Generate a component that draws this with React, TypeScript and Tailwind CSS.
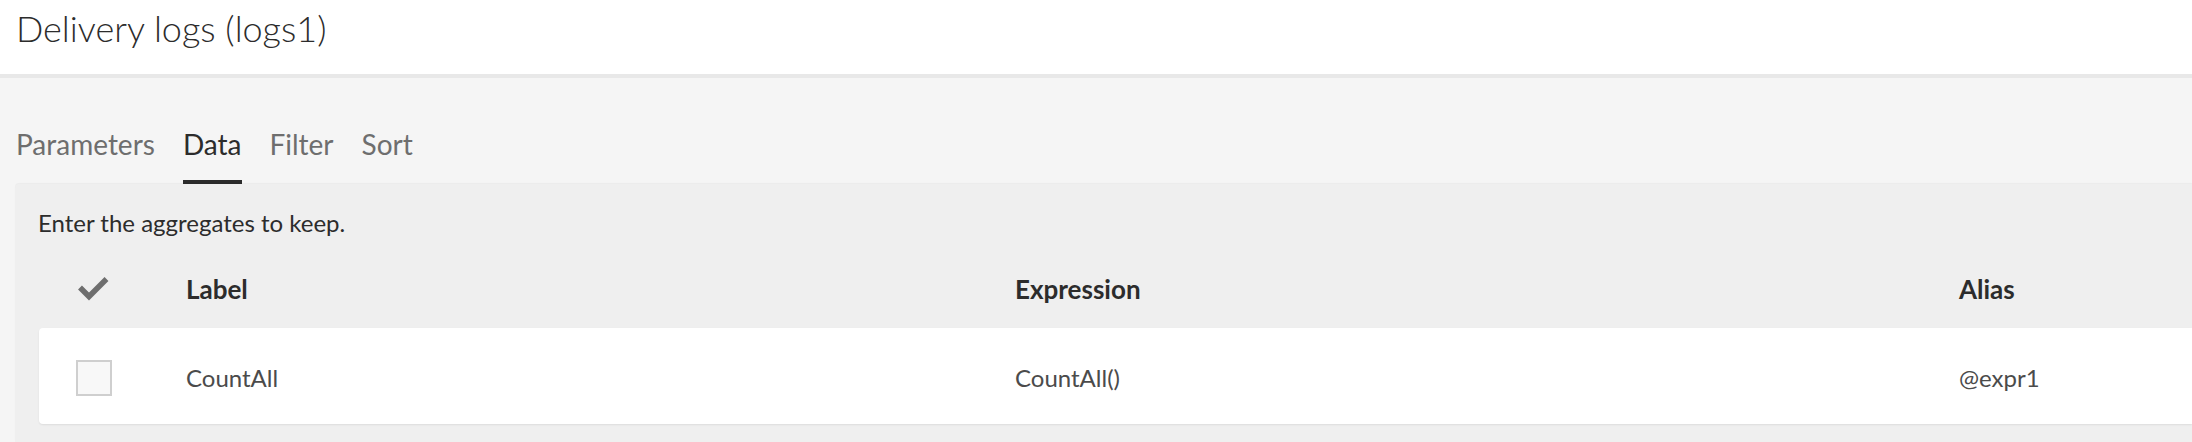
const CheckIcon = () => (
  <svg width="32" height="24" viewBox="0 0 32 24" fill="none">
    <polyline
      points="3,10.5 12,19.5 29.5,2"
      stroke="#6e6e6e"
      strokeWidth="5.5"
      strokeLinejoin="miter"
    />
  </svg>
);

const tabs = ["Parameters", "Data", "Filter", "Sort"];

const App = () => {
  return (
    <div className="flex h-[442px] flex-col overflow-hidden bg-[#f5f5f5] font-['Lato',sans-serif]">
      <div className="h-[78px] border-b-4 border-[#e8e8e8] bg-white pl-4 pt-[10px]">
        <h1 className="text-[36px] font-light leading-none text-[#2c2c2c]">Delivery logs (logs1)</h1>
      </div>

      <div className="flex gap-[28px] pl-4 pt-[52px]">
        {tabs.map((tab) => (
          <div
            key={tab}
            className={
              tab === "Data"
                ? "border-b-4 border-[#2c2c2c] pb-[22px] text-[28px] leading-none text-[#2c2c2c]"
                : "border-b-4 border-transparent pb-[22px] text-[28px] leading-none text-[#6e6e6e]"
            }
          >
            {tab}
          </div>
        ))}
      </div>

      <div className="ml-[15px] flex-1 rounded-tl-[4px] bg-[#efefef] pl-6 pt-[27px] shadow-[0_-1px_1px_rgba(0,0,0,0.04)]">
        <p className="-ml-px text-[24px] leading-none text-[#2c2c2c]">Enter the aggregates to keep.</p>

        <div className="mt-[20px] flex h-[68px] items-center text-[26px] font-bold leading-none text-[#2c2c2c]">
          <div className="w-[147px] pl-[38px]">
            <CheckIcon />
          </div>
          <div className="w-[829px]">Label</div>
          <div className="w-[944px]">Expression</div>
          <div>Alias</div>
        </div>

        <div className="mt-[5px] flex h-[96px] items-center rounded-l-[4px] bg-white pt-[4px] text-[24px] leading-none text-[#4b4b4b] shadow-[0_1px_2px_rgba(0,0,0,0.08)]">
          <div className="w-[147px] pl-[37px]">
            <div className="h-[36px] w-[36px] border-2 border-[#cfcfcf] bg-[#f8f8f8]" />
          </div>
          <div className="w-[829px]">CountAll</div>
          <div className="w-[944px]">CountAll()</div>
          <div>@expr1</div>
        </div>
      </div>
    </div>
  );
};

export default App;
